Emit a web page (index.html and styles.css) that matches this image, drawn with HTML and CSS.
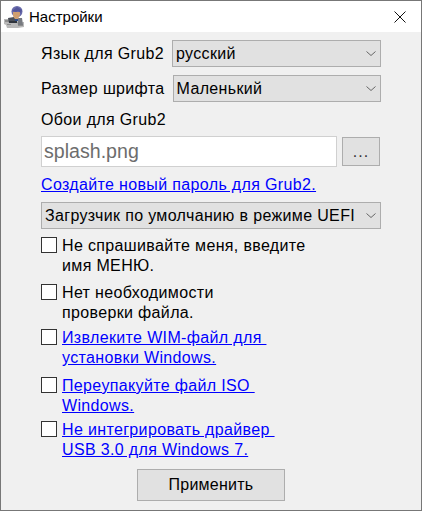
FILE: index.html
```html
<!DOCTYPE html>
<html lang="ru">
<head>
<meta charset="utf-8">
<title>Настройки</title>
<link rel="stylesheet" href="styles.css">
</head>
<body>
<div class="window">
  <header class="titlebar">
    <svg class="app-icon" viewBox="0 0 20 22" width="20" height="22" aria-hidden="true">
      <path d="M0 13h9l2 3h9v5l-6 1H3l-1-3-2-1z" fill="#b9b9b9"/>
      <path d="M1 14h8v2H1zM3 18h4v1H3zM14 19h5v1h-5z" fill="#8d8d8d"/>
      <path d="M4 12l6-1 3 4v2H5z" fill="#4b5058"/>
      <path d="M5 15h8v2H5z" fill="#2f343c"/>
      <path d="M13 12h5l1 7h-5z" fill="#777a80"/>
      <circle cx="13" cy="5.500" r="5.500" fill="#6a6cab"/>
      <path d="M9 6h7v3l-2 4h-3l-2-3z" fill="#cf9f70"/>
      <path d="M8 5l5-4 5 3-1 3-3-2-2 1z" fill="#54569a"/>
      <path d="M11 13h3v2h-3z" fill="#2e4f8c"/>
    </svg>
    <span class="title">Настройки</span>
    <svg class="close" viewBox="0 0 12 12" width="12" height="12" aria-hidden="true">
      <path d="M.5.500l11 11M11.500.500l-11 11" stroke="#111" stroke-width="1" fill="none"/>
    </svg>
  </header>
  <main class="content">
    <div class="row row-lang">
      <span class="label">Язык для Grub2</span>
      <div class="select grow"><span>русский</span><svg class="chev" viewBox="0 0 10 5" width="10" height="5"><path d="M.5.500L5 4.500 9.500.500" fill="none" stroke="#666"/></svg></div>
    </div>
    <div class="row row-font">
      <span class="label">Размер шрифта</span>
      <div class="select grow"><span>Маленький</span><svg class="chev" viewBox="0 0 10 5" width="10" height="5"><path d="M.5.500L5 4.500 9.500.500" fill="none" stroke="#666"/></svg></div>
    </div>
    <div class="label wall">Обои для Grub2</div>
    <div class="row row-file">
      <div class="input">splash.png</div>
      <div class="browse">...</div>
    </div>
    <a class="link pass" href="#">Создайте новый пароль для Grub2.</a>
    <div class="select boot"><span>Загрузчик по умолчанию в режиме UEFI</span><svg class="chev" viewBox="0 0 10 5" width="10" height="5"><path d="M.5.500L5 4.500 9.500.500" fill="none" stroke="#666"/></svg></div>
    <div class="check c1"><span class="box"></span><span>Не спрашивайте меня, введите<br>имя МЕНЮ.</span></div>
    <div class="check c2"><span class="box"></span><span>Нет необходимости<br>проверки файла.</span></div>
    <div class="check c3"><span class="box"></span><a class="link" href="#">Извлеките WIM-файл для&nbsp;<br>установки Windows.</a></div>
    <div class="check c4"><span class="box"></span><a class="link" href="#">Переупакуйте файл ISO&nbsp;<br>Windows.</a></div>
    <div class="check c5"><span class="box"></span><a class="link" href="#">Не интегрировать драйвер&nbsp;<br>USB 3.0 для Windows 7.</a></div>
    <div class="apply-wrap"><div class="apply">Применить</div></div>
  </main>
</div>
</body>
</html>
```
FILE: styles.css
```css
* { box-sizing: border-box; }
html, body { margin: 0; height: 100%; overflow: hidden; }
body { font-family: "Liberation Sans", Arial, sans-serif; font-size: 16px; line-height: 20px; letter-spacing: .35px; color: #000; background: #f0f0f0; }
.window { width: 422px; height: 511px; border: 1px solid #777; display: flex; flex-direction: column; }
.titlebar { height: 31px; flex: none; background: #fff; display: flex; align-items: center; padding: 0 15px 0 3px; font-size: 15px; letter-spacing: 0; }
.app-icon { flex: none; margin-right: 5px; }
.title { flex: 1; }
.content { flex: 1; background: #f0f0f0; padding: 8px 40px 0; display: flex; flex-direction: column; }
.row { display: flex; align-items: center; }
.label { white-space: nowrap; }
.select { height: 27px; background: #e1e1e1; border: 1px solid #adadad; display: flex; align-items: center; justify-content: space-between; padding: 0 3px 0 3px; white-space: nowrap; }
.grow { flex: 1; }
.row-lang .select { margin-left: 8px; }
.row-font .select { margin-left: 8px; }
.row-font { margin-top: 8px; }
.chev { flex: none; margin-right: 1px; }
.wall { margin-top: 7px; padding-top: 1px; }
.row-file { margin-top: 6px; align-items: center; }
.input { width: 296px; height: 31px; background: #fff; border: 1px solid #d0d0d0; color: #6d6d6d; font-size: 19.6px; letter-spacing: 0; line-height: 29px; padding-left: 2px; }
.browse { width: 38px; height: 29px; margin-left: 5px; background: #e1e1e1; border: 1px solid #adadad; text-align: center; line-height: 27px; color: #333; letter-spacing: 1px; }
.link { color: #0000ff; text-decoration: underline; }
.pass { margin-top: 8px; display: block; }
.boot { margin-top: 7px; }
.boot .chev { margin-left: 4px; }
.check { display: flex; align-items: flex-start; gap: 5px; white-space: nowrap; }
.c1 { margin-top: 7px; }
.c2 { margin-top: 7px; }
.c3 { margin-top: 5px; }
.c4 { margin-top: 8px; }
.c5 { margin-top: 4px; }
.box { width: 16px; height: 16px; flex: none; background: #fff; border: 1px solid #333; margin-top: 1px; }
.apply-wrap { display: flex; justify-content: center; margin-top: 9px; }
.apply { width: 148px; height: 32px; background: #e1e1e1; border: 1px solid #adadad; text-align: center; line-height: 30px; letter-spacing: .25px; }
```
